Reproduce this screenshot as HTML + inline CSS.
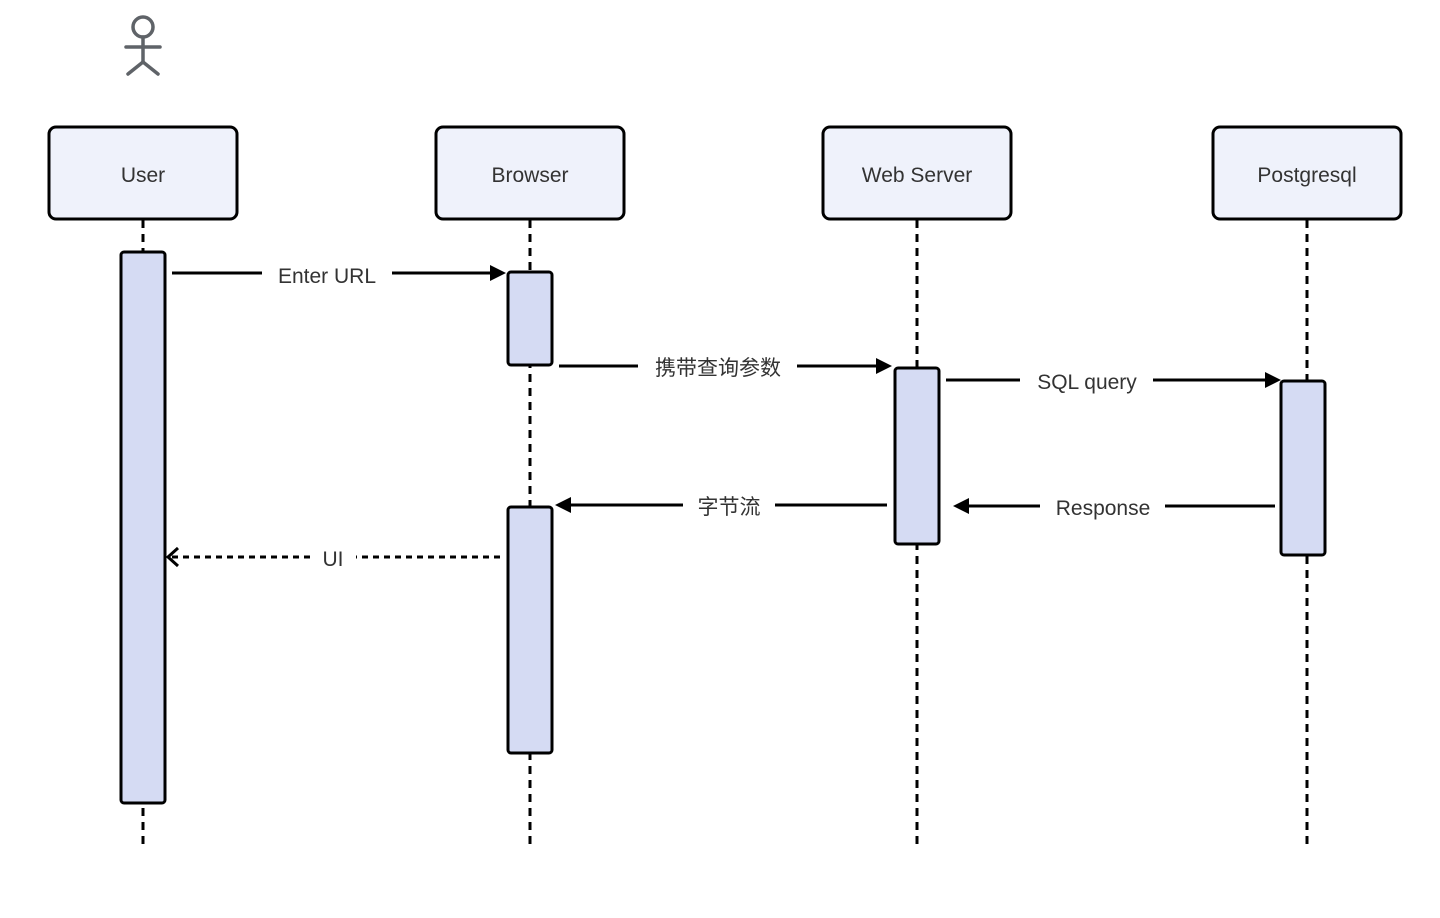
<!DOCTYPE html>
<html><head><meta charset="utf-8"><style>
html,body{margin:0;padding:0;background:#fff;}
svg{display:block;}
text{font-family:"Liberation Sans","Noto Sans CJK SC",sans-serif;font-size:21px;fill:#333;}
</style></head><body>
<svg width="1440" height="918" viewBox="0 0 1440 918" xmlns="http://www.w3.org/2000/svg">
<!-- actor -->
<g stroke="#5f6368" stroke-width="3.5" fill="none" stroke-linecap="round">
<circle cx="143" cy="27" r="10"/>
<line x1="126" y1="47" x2="160" y2="47"/>
<line x1="143" y1="37" x2="143" y2="62"/>
<polyline points="128,74 143,62 158,74"/>
</g>
<!-- lifelines -->
<g stroke="#000" stroke-width="3" stroke-dasharray="8,6">
<line x1="143" y1="220" x2="143" y2="848"/>
<line x1="530" y1="220" x2="530" y2="848"/>
<line x1="917" y1="220" x2="917" y2="848"/>
<line x1="1307" y1="220" x2="1307" y2="848"/>
</g>
<!-- boxes -->
<g fill="#eff2fb" stroke="#000" stroke-width="3">
<rect x="49" y="127" width="188" height="92" rx="7"/>
<rect x="436" y="127" width="188" height="92" rx="7"/>
<rect x="823" y="127" width="188" height="92" rx="7"/>
<rect x="1213" y="127" width="188" height="92" rx="7"/>
</g>
<g text-anchor="middle">
<text x="143" y="182">User</text>
<text x="530" y="182">Browser</text>
<text x="917" y="182">Web Server</text>
<text x="1307" y="182">Postgresql</text>
</g>
<!-- activations -->
<g fill="#d5dbf3" stroke="#000" stroke-width="3">
<rect x="121" y="252" width="44" height="551" rx="3"/>
<rect x="508" y="272" width="44" height="93" rx="3"/>
<rect x="508" y="507" width="44" height="246" rx="3"/>
<rect x="895" y="368" width="44" height="176" rx="3"/>
<rect x="1281" y="381" width="44" height="174" rx="3"/>
</g>
<!-- messages -->
<g stroke="#000" stroke-width="3">
<line x1="172" y1="273" x2="262" y2="273"/>
<line x1="392" y1="273" x2="492" y2="273"/>
<line x1="559" y1="366" x2="638" y2="366"/>
<line x1="797" y1="366" x2="878" y2="366"/>
<line x1="946" y1="380" x2="1020" y2="380"/>
<line x1="1153" y1="380" x2="1267" y2="380"/>
<line x1="1275" y1="506" x2="1165" y2="506"/>
<line x1="1040" y1="506" x2="967" y2="506"/>
<line x1="887" y1="505" x2="775" y2="505"/>
<line x1="683" y1="505" x2="569" y2="505"/>
<line x1="500" y1="557" x2="356" y2="557" stroke-dasharray="6,5"/>
<line x1="310" y1="557" x2="170" y2="557" stroke-dasharray="6,5"/>
<polyline points="178,548 168,557 178,566" fill="none"/>
</g>
<g fill="#000">
<polygon points="490,265 506,273 490,281"/>
<polygon points="876,358 892,366 876,374"/>
<polygon points="1265,372 1281,380 1265,388"/>
<polygon points="969,498 953,506 969,514"/>
<polygon points="571,497 555,505 571,513"/>
</g>
<g text-anchor="middle">
<text x="327" y="283">Enter URL</text>
<text x="718" y="375">携带查询参数</text>
<text x="1087" y="389">SQL query</text>
<text x="1103" y="515">Response</text>
<text x="729" y="514">字节流</text>
<text x="333" y="566">UI</text>
</g>
</svg>
</body></html>
